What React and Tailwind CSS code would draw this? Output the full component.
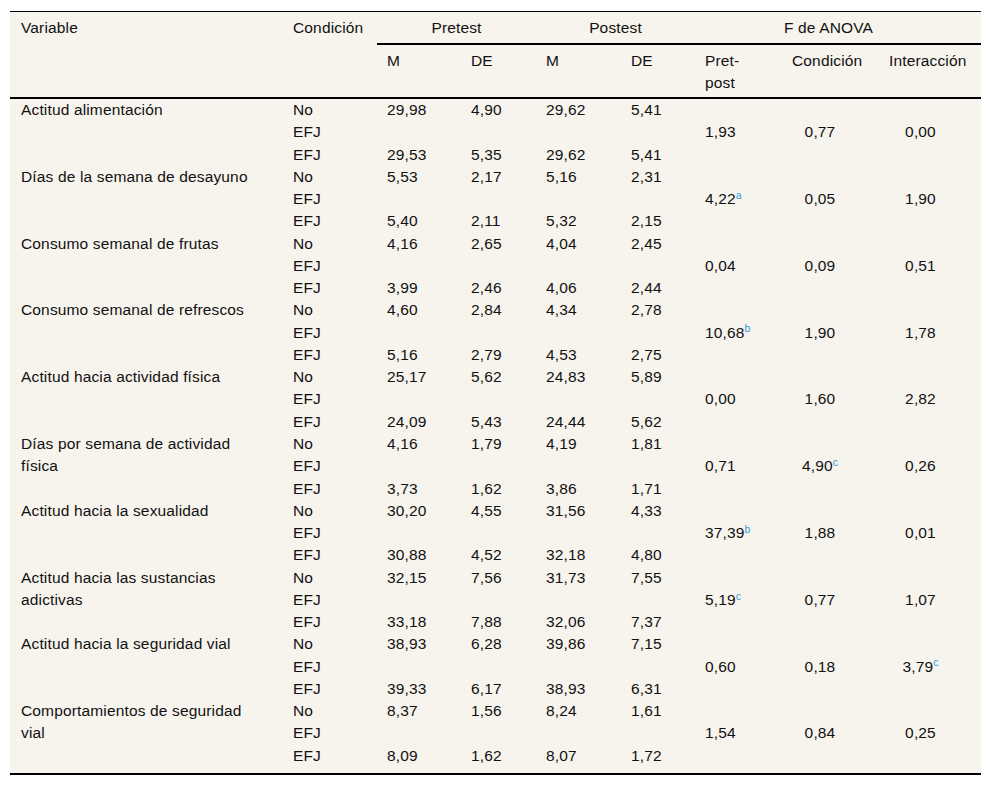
import React from "react";

const rows = [
  { v: ["Actitud alimentación"], no: ["29,98", "4,90", "29,62", "5,41"], efj: ["29,53", "5,35", "29,62", "5,41"], a: [["1,93"], ["0,77"], ["0,00"]] },
  { v: ["Días de la semana de desayuno"], no: ["5,53", "2,17", "5,16", "2,31"], efj: ["5,40", "2,11", "5,32", "2,15"], a: [["4,22", "a"], ["0,05"], ["1,90"]] },
  { v: ["Consumo semanal de frutas"], no: ["4,16", "2,65", "4,04", "2,45"], efj: ["3,99", "2,46", "4,06", "2,44"], a: [["0,04"], ["0,09"], ["0,51"]] },
  { v: ["Consumo semanal de refrescos"], no: ["4,60", "2,84", "4,34", "2,78"], efj: ["5,16", "2,79", "4,53", "2,75"], a: [["10,68", "b"], ["1,90"], ["1,78"]] },
  { v: ["Actitud hacia actividad física"], no: ["25,17", "5,62", "24,83", "5,89"], efj: ["24,09", "5,43", "24,44", "5,62"], a: [["0,00"], ["1,60"], ["2,82"]] },
  { v: ["Días por semana de actividad", "física"], no: ["4,16", "1,79", "4,19", "1,81"], efj: ["3,73", "1,62", "3,86", "1,71"], a: [["0,71"], ["4,90", "c"], ["0,26"]] },
  { v: ["Actitud hacia la sexualidad"], no: ["30,20", "4,55", "31,56", "4,33"], efj: ["30,88", "4,52", "32,18", "4,80"], a: [["37,39", "b"], ["1,88"], ["0,01"]] },
  { v: ["Actitud hacia las sustancias", "adictivas"], no: ["32,15", "7,56", "31,73", "7,55"], efj: ["33,18", "7,88", "32,06", "7,37"], a: [["5,19", "c"], ["0,77"], ["1,07"]] },
  { v: ["Actitud hacia la seguridad vial"], no: ["38,93", "6,28", "39,86", "7,15"], efj: ["39,33", "6,17", "38,93", "6,31"], a: [["0,60"], ["0,18"], ["3,79", "c"]] },
  { v: ["Comportamientos de seguridad", "vial"], no: ["8,37", "1,56", "8,24", "1,61"], efj: ["8,09", "1,62", "8,07", "1,72"], a: [["1,54"], ["0,84"], ["0,25"]] },
];

const COLS = "grid grid-cols-[273px_94px_84px_75px_85px_74px_87px_97px_102px]";

function L({ children }) {
  return <div className="h-[22.27px] leading-[22.27px] whitespace-nowrap">{children}</div>;
}

function Val({ v }) {
  return (
    <>
      {v[0]}
      {v[1] && <sup className="text-[10.5px] text-[#2e9fdc]">{v[1]}</sup>}
    </>
  );
}

function Group({ r }) {
  return (
    <>
      <div className="pl-[11px] leading-[22.27px] whitespace-nowrap">
        {r.v.map((t, i) => (
          <div key={i}>{t}</div>
        ))}
      </div>
      <div className="pl-[10px]">
        <L>No</L>
        <L>EFJ</L>
        <L>EFJ</L>
      </div>
      {[0, 1, 2, 3].map((i) => (
        <div key={i} className="pl-[10px]">
          <L>{r.no[i]}</L>
          <L></L>
          <L>{r.efj[i]}</L>
        </div>
      ))}
      <div className="pl-[10px]">
        <L></L>
        <L><Val v={r.a[0]} /></L>
        <L></L>
      </div>
      <div>
        <L></L>
        <L><div className="w-[76px] text-center"><Val v={r.a[1]} /></div></L>
        <L></L>
      </div>
      <div>
        <L></L>
        <L><div className="w-[83px] text-center"><Val v={r.a[2]} /></div></L>
        <L></L>
      </div>
    </>
  );
}

export default function App() {
  const h1 = "h-[33px] border-b-2 border-black pt-[5px] leading-[22.27px] text-center";
  const h2 = "h-[54px] border-b-2 border-black pt-[5px] pl-[10px] leading-[22.27px]";
  return (
    <div className="min-h-screen bg-white pt-[11px] pl-[10px] font-['Liberation_Sans',Arial,sans-serif] text-[15.5px] tracking-[0.15px] text-[#111]">
      <div className="w-[971px] bg-[#f7f4ee] border-t border-black">
        <div className={COLS}>
          <div className="row-span-2 border-b-2 border-black pt-[5px] pl-[11px] leading-[22.27px]">Variable</div>
          <div className="row-span-2 border-b-2 border-black pt-[5px] pl-[10px] leading-[22.27px]">Condición</div>
          <div className={`col-span-2 ${h1}`}>Pretest</div>
          <div className={`col-span-2 ${h1}`}>Postest</div>
          <div className={`col-span-3 ${h1} pr-[19px]`}>F de ANOVA</div>
          <div className={h2}>M</div>
          <div className={h2}>DE</div>
          <div className={h2}>M</div>
          <div className={h2}>DE</div>
          <div className={h2}>
            Pret-
            <br />
            post
          </div>
          <div className={h2}>Condición</div>
          <div className={h2}>Interacción</div>
        </div>
        <div className={`${COLS} pb-[6px] border-b-2 border-black`}>
          {rows.map((r, i) => (
            <Group key={i} r={r} />
          ))}
        </div>
      </div>
    </div>
  );
}
